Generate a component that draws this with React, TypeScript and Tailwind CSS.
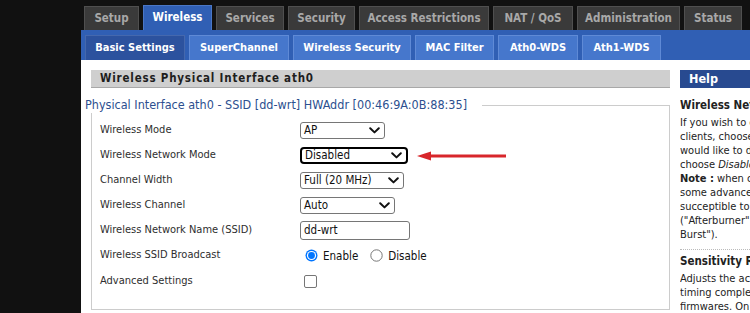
import React from "react";

const F = { fontFamily: '"DejaVu Sans Condensed", Tahoma, "Liberation Sans", sans-serif' };

const topTabs: { label: string; w: string; active?: boolean }[] = [
  { label: "Setup", w: "w-[55px]" },
  { label: "Wireless", w: "w-[69px]", active: true },
  { label: "Services", w: "w-[68px]" },
  { label: "Security", w: "w-[67px]" },
  { label: "Access Restrictions", w: "w-[130px]" },
  { label: "NAT / QoS", w: "w-[80px]" },
  { label: "Administration", w: "w-[103px]" },
  { label: "Status", w: "w-[58px]" },
];

const subTabs: { label: string; w: string; active?: boolean }[] = [
  { label: "Basic Settings", w: "w-[100px]", active: true },
  { label: "SuperChannel", w: "w-[100px]" },
  { label: "Wireless Security", w: "w-[118px]" },
  { label: "MAC Filter", w: "w-[79px]" },
  { label: "Ath0-WDS", w: "w-[80px]" },
  { label: "Ath1-WDS", w: "w-[79px]" },
];

function Chevron() {
  return (
    <svg width="11" height="7" viewBox="0 0 11 7" className="shrink-0">
      <path d="M1.2 1.2 L5.5 5.4 L9.8 1.2" fill="none" stroke="#111" strokeWidth="2" strokeLinecap="round" strokeLinejoin="round" />
    </svg>
  );
}

function Select({ value, w, focused }: { value: string; w: string; focused?: boolean }) {
  return (
    <div
      className={`${w} h-[17px] flex items-center justify-between pl-[3px] pr-[4px] bg-white text-[11.5px] text-[#111] ${
        focused ? "border-2 border-black rounded-[4px] pl-[2px]" : "border border-[#767676] rounded-[3px]"
      }`}
    >
      <span className="leading-none">{value}</span>
      <Chevron />
    </div>
  );
}

function Row({ label, children, h = "h-[25px]" }: { label: string; children: React.ReactNode; h?: string }) {
  return (
    <div className={`flex items-center ${h}`}>
      <div className="w-[200px] text-[11px] text-[#2e2e2e]">{label}</div>
      <div className="flex items-center">{children}</div>
    </div>
  );
}

export default function App() {
  return (
    <div className="w-[750px] h-[313px] overflow-hidden bg-[#111]" style={F}>
      <div className="ml-[81px] flex flex-col h-full">
        {/* top tabs */}
        <div className="h-[30px] shrink-0 flex items-end gap-[4px] pl-[3px]">
          {topTabs.map((t) =>
            t.active ? (
              <div
                key={t.label}
                className={`${t.w} h-[25px] bg-[#305fb4] border-t border-l border-r border-[#4a77c6] flex items-center justify-center text-white font-bold text-[11.5px]`}
              >
                {t.label}
              </div>
            ) : (
              <div
                key={t.label}
                className={`${t.w} h-[24px] bg-[#3a3a3a] border-t border-l border-r border-[#4f4f4f] flex items-center justify-center text-[#a8a8a8] font-bold text-[11.5px]`}
              >
                {t.label}
              </div>
            )
          )}
        </div>
        {/* sub tabs */}
        <div className="h-[30px] shrink-0 bg-[#305fb4] flex items-end gap-[4px] pl-[4px]">
          {subTabs.map((t) => (
            <div
              key={t.label}
              className={`${t.w} h-[25px] flex items-center justify-center text-white font-bold text-[11px] border-t border-l border-r ${
                t.active ? "bg-[#2c529e] border-[#4568ad]" : "bg-[#4677cc] border-[#5f8ad6]"
              }`}
            >
              {t.label}
            </div>
          ))}
        </div>
        {/* content */}
        <div className="flex-1 min-h-0 bg-white flex">
          <div className="w-[599px] shrink-0 pt-[10px]">
            <div className="ml-[10px] w-[579px] h-[18px] bg-[#cfcfcf] border-b border-[#a8a8a8] flex items-center pl-[9px] text-[11.5px] font-bold tracking-[0.8px] text-[#1e1e1e]">
              Wireless Physical Interface ath0
            </div>
            <div className="mt-[9px] ml-[4px] flex h-[16px]">
              <div className="text-[12.5px] leading-[16px] text-[#2c4f8f] whitespace-nowrap pr-[15px]">
                Physical Interface ath0 - SSID [dd-wrt] HWAddr [00:46:9A:0B:88:35]
              </div>
              <div className="self-end flex-1 h-[8px] border-t border-r border-[#cccccc] mr-[10px]" />
            </div>
            <div className="ml-[10px] w-[579px] border-l border-r border-b border-[#cccccc] pl-[8px] pt-[5px] pb-[14px]">
              <Row label="Wireless Mode">
                <Select value="AP" w="w-[85px]" />
              </Row>
              <Row label="Wireless Network Mode">
                <Select value="Disabled" w="w-[108px]" focused />
                <svg width="90" height="10" viewBox="0 0 90 10" className="ml-[9px]">
                  <path d="M12 5 L89 5" stroke="#d8262b" strokeWidth="3" />
                  <path d="M0 5 L14 0.5 L14 9.5 Z" fill="#d8262b" />
                </svg>
              </Row>
              <Row label="Channel Width">
                <Select value="Full (20 MHz)" w="w-[104px]" />
              </Row>
              <Row label="Wireless Channel">
                <Select value="Auto" w="w-[95px]" />
              </Row>
              <Row label="Wireless Network Name (SSID)">
                <div className="w-[110px] h-[19px] border border-[#767676] rounded-[3px] pl-[3px] flex items-center text-[11.5px] text-[#111]">
                  dd-wrt
                </div>
              </Row>
              <Row label="Wireless SSID Broadcast">
                <div className="flex items-center text-[11.5px] text-[#111] pl-[5px]">
                  <svg width="13" height="13" viewBox="0 0 13 13">
                    <circle cx="6.5" cy="6.5" r="6" fill="#0075ff" />
                    <circle cx="6.5" cy="6.5" r="4.6" fill="#fff" />
                    <circle cx="6.5" cy="6.5" r="3.4" fill="#0075ff" />
                  </svg>
                  <span className="ml-[5px] mt-[3px]">Enable</span>
                  <svg width="13" height="13" viewBox="0 0 13 13" className="ml-[12px]">
                    <circle cx="6.5" cy="6.5" r="5.7" fill="#fff" stroke="#767676" strokeWidth="1" />
                  </svg>
                  <span className="ml-[5px] mt-[3px]">Disable</span>
                </div>
              </Row>
              <Row label="Advanced Settings" h="h-[27px]">
                <div className="ml-[4px] w-[13px] h-[13px] border border-[#767676] rounded-[2px] bg-white" />
              </Row>
            </div>
          </div>
          {/* help */}
          <div className="flex-1 pt-[10px] overflow-hidden">
            <div className="h-[18px] bg-[#284a90] flex items-center pl-[9px] text-white font-bold text-[12.5px]">Help</div>
            <div className="whitespace-nowrap text-[11px] leading-[14px] text-[#222]">
              <div className="mt-[10px] font-bold text-[11.5px] leading-[14px]">Wireless Network Mode:</div>
              <div className="mt-[4px]">If you wish to exclude Wireless-G</div>
              <div>clients, choose B-Only mode. If you</div>
              <div>would like to disable wireless access,</div>
              <div>
                choose <i>Disable</i>.
              </div>
              <div>
                <b>Note :</b> when changing wireless mode,
              </div>
              <div>some advanced parameters are</div>
              <div>succeptible to be modified</div>
              <div>("Afterburner" or "Frame</div>
              <div>Burst").</div>
              <div className="mt-[7px] border-t border-dotted border-[#bbb]" />
              <div className="mt-[4px] font-bold text-[11.5px]">Sensitivity Range (ACK Timing):</div>
              <div className="mt-[4px]">Adjusts the ack timing. 0 disables ack</div>
              <div>timing completely for broadcom</div>
              <div>firmwares. On Atheros based</div>
              <div>firmwares, it will turn into auto</div>
            </div>
          </div>
        </div>
      </div>
    </div>
  );
}
